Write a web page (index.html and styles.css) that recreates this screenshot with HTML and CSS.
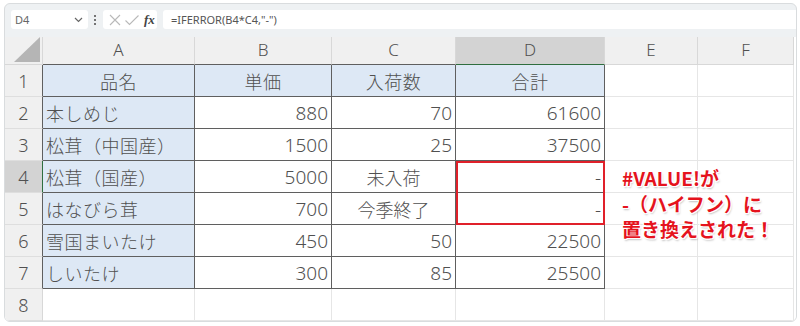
FILE: index.html
```html
<!DOCTYPE html>
<html lang="ja">
<head>
<meta charset="utf-8">
<link rel="stylesheet" href="styles.css">
</head>
<body>
<div class="frame">
  <div class="toolbar">
    <div class="namebox"><span>D4</span>
      <svg class="chev" width="9" height="6" viewBox="0 0 9 6"><path d="M1 1 L4.5 4.5 L8 1" fill="none" stroke="#666" stroke-width="1.2"/></svg>
    </div>
    <svg class="dots" width="4" height="12" viewBox="0 0 4 12"><circle cx="2" cy="2" r="1.1" fill="#555"/><circle cx="2" cy="6" r="1.1" fill="#555"/><circle cx="2" cy="10" r="1.1" fill="#555"/></svg>
    <div class="fxbox">
      <svg width="14" height="14" viewBox="0 0 14 14"><path d="M2 2 L12 12 M12 2 L2 12" stroke="#b9b9b9" stroke-width="1.1"/></svg>
      <svg width="16" height="14" viewBox="0 0 16 14"><path d="M1.5 7.5 L5.5 11.5 L14.5 2.5" fill="none" stroke="#b9b9b9" stroke-width="1.1"/></svg>
      <span class="fx">fx</span>
    </div>
    <div class="formula">=IFERROR(B4*C4,"-")</div>
  </div>
  <div class="sheet">
    <div class="hc corner"><svg width="27" height="26" viewBox="0 0 27 26"><polygon points="26,0 26,25 0,25" fill="#b5b5b5"/></svg></div>
    <div class="hc tt">A</div>
    <div class="hc tt">B</div>
    <div class="hc tt">C</div>
    <div class="hc sel">D</div>
    <div class="hc">E</div>
    <div class="hc">F</div>

    <div class="rh tl">1</div>
    <div class="t blue ctr">品名</div>
    <div class="t blue ctr">単価</div>
    <div class="t blue ctr">入荷数</div>
    <div class="t blue ctr">合計</div>
    <div class="c"></div>
    <div class="c"></div>

    <div class="rh tl">2</div>
    <div class="t blue">本しめじ</div>
    <div class="t num">880</div>
    <div class="t num">70</div>
    <div class="t num">61600</div>
    <div class="c"></div>
    <div class="c"></div>

    <div class="rh tl">3</div>
    <div class="t blue">松茸（中国産）</div>
    <div class="t num">1500</div>
    <div class="t num">25</div>
    <div class="t num">37500</div>
    <div class="c"></div>
    <div class="c"></div>

    <div class="rh tl rsel">4</div>
    <div class="t blue">松茸（国産）</div>
    <div class="t num">5000</div>
    <div class="t ctr">未入荷</div>
    <div class="t num">-</div>
    <div class="c"></div>
    <div class="c"></div>

    <div class="rh tl">5</div>
    <div class="t blue">はなびら茸</div>
    <div class="t num">700</div>
    <div class="t ctr">今季終了</div>
    <div class="t num">-</div>
    <div class="c"></div>
    <div class="c"></div>

    <div class="rh tl">6</div>
    <div class="t blue">雪国まいたけ</div>
    <div class="t num">450</div>
    <div class="t num">50</div>
    <div class="t num">22500</div>
    <div class="c"></div>
    <div class="c"></div>

    <div class="rh tl">7</div>
    <div class="t blue">しいたけ</div>
    <div class="t num">300</div>
    <div class="t num">85</div>
    <div class="t num">25500</div>
    <div class="c"></div>
    <div class="c"></div>

    <div class="rh">8</div>
    <div class="c"></div>
    <div class="c"></div>
    <div class="c"></div>
    <div class="c"></div>
    <div class="c"></div>
    <div class="c"></div>

    <div class="redbox"></div>
    <div class="note">#VALUE!が<br>-（ハイフン）に<br>置き換えされた！</div>
  </div>
</div>
</body>
</html>
```

FILE: styles.css
```css
html, body {
  margin: 0;
  padding: 0;
  background: #ffffff;
}
body {
  width: 800px;
  height: 326px;
  overflow: hidden;
  font-family: "Noto Sans CJK JP", "Noto Sans", sans-serif;
}
.frame {
  margin: 3px 0 0 4px;
  width: 791px;
  height: 317px;
  border: 1px solid #d9dcde;
  border-radius: 6px;
  background: #eef1f3;
  overflow: hidden;
}
.toolbar {
  height: 33px;
  box-sizing: border-box;
  padding: 6px 0 0 6px;
  display: flex;
  align-items: flex-start;
}
.namebox {
  width: 77px;
  height: 19px;
  background: #fff;
  border-radius: 3px;
  box-sizing: border-box;
  padding: 0 5px 0 4px;
  display: flex;
  align-items: center;
  justify-content: space-between;
  font-family: "Noto Sans", sans-serif;
  font-size: 11px;
  color: #666;
}
.dots {
  margin: 4px 0 0 5px;
}
.fxbox {
  margin-left: 6px;
  width: 54px;
  height: 19px;
  background: #fff;
  border-radius: 3px;
  box-sizing: border-box;
  padding-left: 5px;
  display: flex;
  align-items: center;
  gap: 2px;
}
.fx {
  font-family: "Liberation Serif", serif;
  font-style: italic;
  font-weight: bold;
  font-size: 13px;
  color: #444;
  margin-left: 2px;
}
.formula {
  margin-left: 6px;
  flex: 1;
  height: 19px;
  background: #fff;
  border-radius: 3px 0 0 3px;
  box-sizing: border-box;
  padding-left: 8px;
  font-family: "Noto Sans", sans-serif;
  font-size: 11px;
  line-height: 19px;
  color: #555;
}
.sheet {
  position: relative;
  display: grid;
  grid-template-columns: 38px 152px 137px 124px 149px 93px 96px;
  grid-template-rows: 28px repeat(8, 32px);
  background: #fff;
}
.sheet > div {
  box-sizing: border-box;
  display: flex;
  align-items: center;
  color: #505050;
  font-size: 18px;
  font-weight: 300;
  white-space: nowrap;
  overflow: hidden;
}
.hc {
  background: #f0f0f0;
  border-right: 1px solid #d8d8d8;
  border-bottom: 1px solid #d8d8d8;
  justify-content: center;
  font-family: "Noto Sans", sans-serif;
  font-size: 17px !important;
  color: #505050 !important;
  padding-bottom: 2px;
}
.corner {
  justify-content: flex-end !important;
  align-items: flex-end !important;
  padding: 0 1px 1px 0 !important;
}
.hc.tt {
  border-bottom-color: #5f5f5f;
}
.hc.sel {
  background: #d3d3d3;
  border-bottom: 1px solid #2f6e3f;
}
.rh {
  background: #f0f0f0;
  border-right: 1px solid #d8d8d8;
  border-bottom: 1px solid #dedede;
  justify-content: center;
  font-family: "Noto Sans", sans-serif;
  color: #505050 !important;
}
.rh.tl {
  border-right-color: #5f5f5f;
}
.rh.rsel {
  background: #d3d3d3;
  border-right-color: #2f6e3f;
}
.c {
  border-right: 1px solid #e6e6e6;
  border-bottom: 1px solid #e6e6e6;
}
.t {
  border-right: 1px solid #5f5f5f;
  border-bottom: 1px solid #5f5f5f;
  padding: 1px 3px 0 3px;
}
.blue {
  background: #dde8f5;
  letter-spacing: 0.5px;
}
.ctr {
  justify-content: center;
}
.num {
  justify-content: flex-end;
  font-family: "Noto Sans", sans-serif;
  font-size: 19px !important;
  letter-spacing: 0;
}
.sheet > .redbox {
  position: absolute;
  left: 451px;
  top: 124px;
  width: 149px;
  height: 64px;
  border: 2px solid #e0202a;
}
.sheet > .note {
  position: absolute;
  left: 617px;
  top: 128px;
  display: block;
  overflow: visible;
  font-family: "Noto Sans CJK JP", sans-serif;
  font-weight: bold;
  font-size: 19px;
  line-height: 25.5px;
  color: #e5131d;
  text-shadow: -1px -1px 0 #fff, 1px -1px 0 #fff, -1px 1px 0 #fff, 1px 1px 0 #fff, 0 -1px 0 #fff, 0 1px 0 #fff, -1px 0 0 #fff, 1px 0 0 #fff, 1px 2px 2px rgba(0,0,0,0.25);
}
```
